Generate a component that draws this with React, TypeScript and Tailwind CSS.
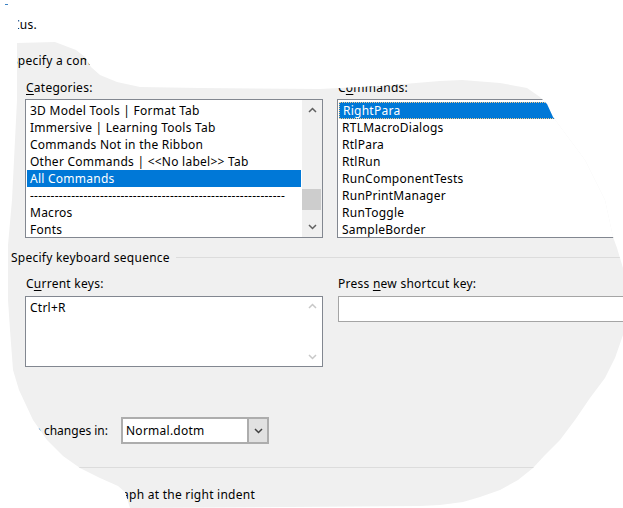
import React from 'react'

const categories = [
  '3D Model Tools | Format Tab',
  'Immersive | Learning Tools Tab',
  'Commands Not in the Ribbon',
  'Other Commands | <<No label>> Tab',
  'All Commands',
  '--------------------------------------------------------------',
  'Macros',
  'Fonts',
]

const commands = [
  'RightPara',
  'RTLMacroDialogs',
  'RtlPara',
  'RtlRun',
  'RunComponentTests',
  'RunPrintManager',
  'RunToggle',
  'SampleBorder',
]

function Chevron({ up = false, color = '#606060' }: { up?: boolean; color?: string }) {
  return (
    <svg width="9" height="6" viewBox="0 0 9 6">
      <polyline
        points={up ? '1,5 4.5,1.5 8,5' : '1,1 4.5,4.5 8,1'}
        fill="none"
        stroke={color}
        strokeWidth="1.5"
      />
    </svg>
  )
}

export default function App() {
  return (
    <div className="w-[623px] h-[508px] bg-white overflow-hidden text-[12px] leading-[16px] tracking-[0.25px] text-black font-['Noto_Sans',sans-serif]">
      {/* stray title fragment */}
      <div className="h-[42px] pt-[4px] pl-[5px]">
        <div className="w-[3px] h-px bg-[#3b82c4]" />
        <div className="ml-[13px] mt-[12px] w-[26px] overflow-hidden whitespace-nowrap">
          <span className="inline-block -ml-[6px]">Cus.</span>
        </div>
      </div>

      {/* dialog body, cut out along the lasso */}
      <div className="h-[466px] bg-[#f0f0f0] pt-[11px] [clip-path:polygon(17px_1px,55px_0px,76px_8px,85px_15px,91px_25px,100px_33px,117px_40px,140px_45px,200px_46px,320px_47px,380px_44px,440px_39px,462px_38px,500px_41px,527px_46px,540px_55px,547px_62px,553px_75px,585px_118px,605px_158px,613px_195px,617px_206px,623px_226px,623px_293px,615px_316px,605px_336px,590px_356px,575px_378px,560px_398px,545px_413px,533px_426px,518px_438px,500px_448px,480px_455px,463px_460px,440px_463px,420px_464px,130px_466px,125px_450px,118px_444px,100px_436px,80px_426px,63px_414px,47px_398px,33px_378px,19px_348px,13px_328px,10px_288px,8px_258px,8px_203px,12px_158px,17px_58px)]">
        <div className="pl-[11px] whitespace-nowrap">Specify a command</div>

        <div className="flex gap-[14px] pl-[25px] mt-[11px]">
          {/* categories */}
          <div className="w-[298px] shrink-0">
            <div className="pl-[1px]">
              <span className="underline underline-offset-2">C</span>ategories:
            </div>
            <div className="mt-[3px] h-[139px] border border-[#828790] bg-white flex">
              <div className="flex-1 pt-[2px]">
                {categories.map((c, i) => (
                  <div
                    key={i}
                    className={`mx-px h-[17px] leading-[17px] pl-[3px] whitespace-nowrap overflow-hidden ${
                      i === 4 ? 'bg-[#0078d7] text-white' : ''
                    }`}
                  >
                    {c}
                  </div>
                ))}
              </div>
              <div className="w-[20px] bg-[#f0f0f0] flex flex-col items-center">
                <div className="h-[20px] flex items-center justify-center">
                  <Chevron up />
                </div>
                <div className="flex-1 relative w-full">
                  <div className="absolute left-0 right-px top-[69px] h-[21px] bg-[#cdcdcd]" />
                </div>
                <div className="h-[20px] flex items-center justify-center">
                  <Chevron />
                </div>
              </div>
            </div>
          </div>

          {/* commands */}
          <div className="w-[300px] shrink-0">
            <div className="pl-[1px]">
              C<span className="underline underline-offset-2">o</span>mmands:
            </div>
            <div className="mt-[3px] h-[139px] border border-[#828790] bg-white pt-[2px]">
              {commands.map((c, i) => (
                <div
                  key={c}
                  className={`mx-px h-[17px] pl-[3px] whitespace-nowrap ${
                    i === 0
                      ? 'bg-[#0078d7] text-white border border-dotted border-[#f3c98b] pl-[2px] leading-[15px]'
                      : 'leading-[17px]'
                  }`}
                >
                  {c}
                </div>
              ))}
            </div>
          </div>
        </div>

        <div className="flex items-center pl-[11px] mt-[12px]">
          <span className="whitespace-nowrap">Specify keyboard sequence</span>
          <div className="flex-1 h-px bg-[#dcdcdc] ml-[6px] -mt-[2px]" />
        </div>

        <div className="flex gap-[14px] pl-[25px] mt-[10px]">
          <div className="w-[298px] shrink-0">
            <div className="pl-[1px]">
              C<span className="underline underline-offset-2">u</span>rrent keys:
            </div>
            <div className="mt-[4px] h-[71px] border border-[#828790] bg-white flex">
              <div className="flex-1 pl-[4px] pt-[3px]">Ctrl+R</div>
              <div className="w-[20px] flex flex-col items-center justify-between py-[6px]">
                <Chevron up color="#c8c8c8" />
                <Chevron color="#c8c8c8" />
              </div>
            </div>
          </div>
          <div className="w-[300px] shrink-0">
            <div className="pl-[1px]">
              Press <span className="underline underline-offset-2">n</span>ew shortcut key:
            </div>
            <div className="mt-[4px] ml-px h-[26px] border border-[#a5a5a5] bg-white" />
          </div>
        </div>

        <div className="flex items-center mt-[50px] pl-[11px]">
          <span className="w-[110px] pr-[13px] text-right whitespace-nowrap tracking-normal">Save changes in:</span>
          <div className="w-[148px] h-[27px] border-2 border-[#adadad] bg-white flex">
            <div className="flex-1 pl-[3px] leading-[23px]">Normal.dotm</div>
            <div className="w-[20px] bg-[#e1e1e1] border-l-2 border-[#adadad] flex items-center justify-center">
              <Chevron color="#404040" />
            </div>
          </div>
        </div>

        <div className="ml-[11px] mt-[23px] h-px bg-[#dcdcdc]" />

        <div className="pl-[21px] mt-[19px] whitespace-nowrap">
          Aligns the paragraph at the right indent
        </div>
      </div>
    </div>
  )
}
